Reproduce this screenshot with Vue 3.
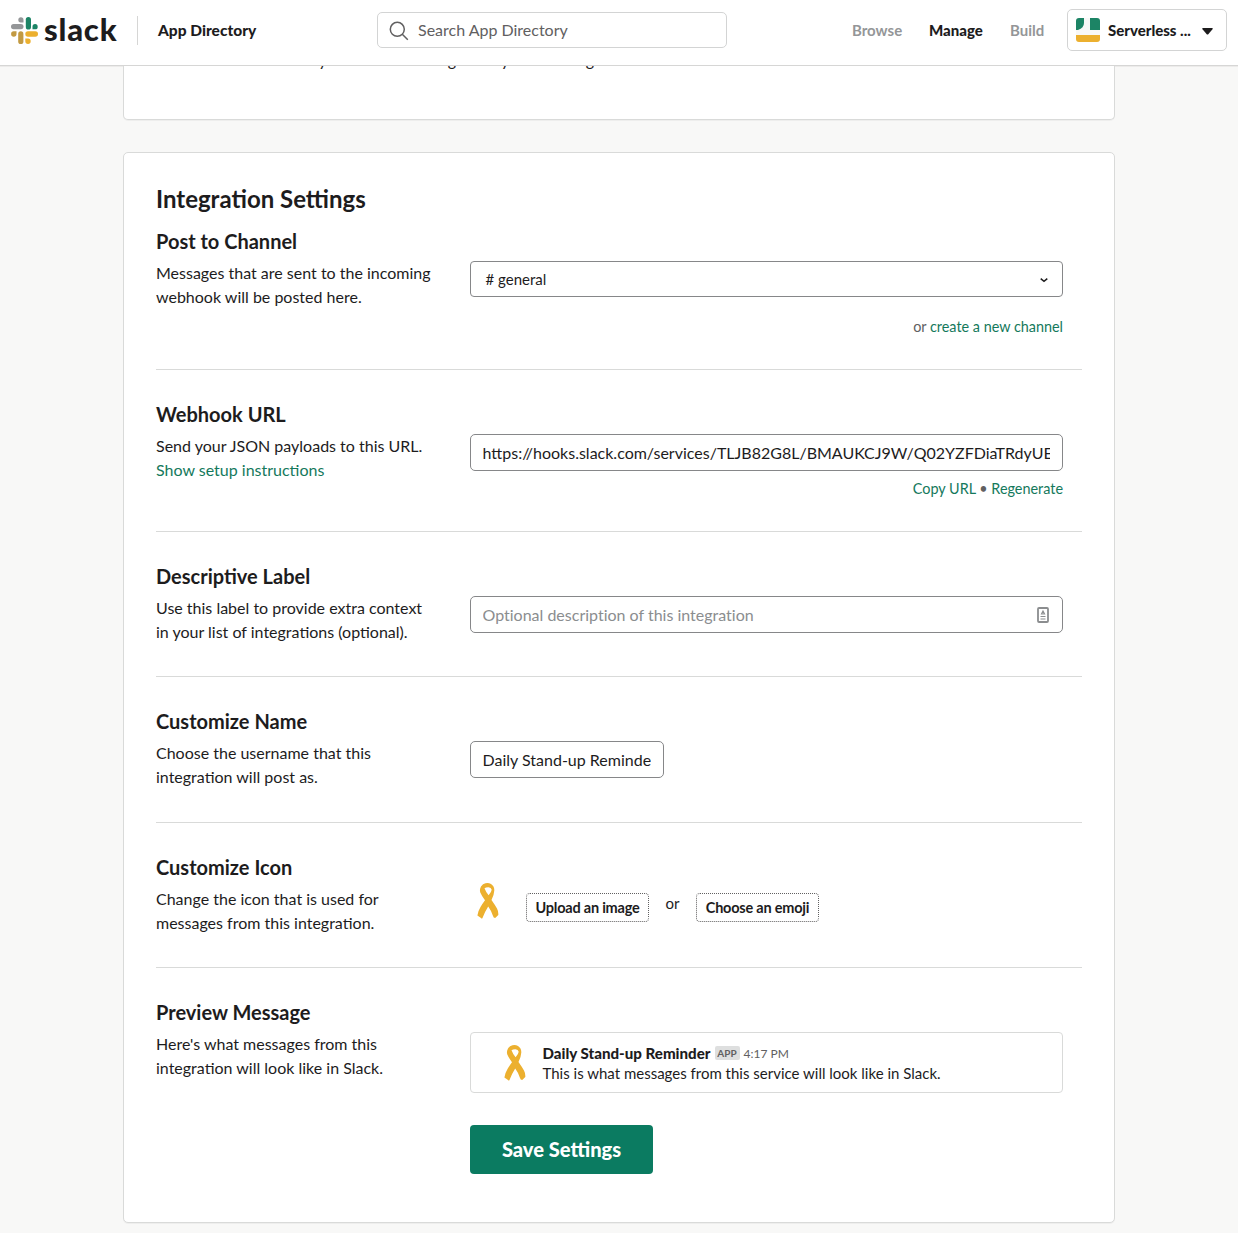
<script setup>
import { h } from 'vue'

const RibbonIcon = () =>
  h('svg', { width: 22, height: 36, viewBox: '0 0 22 36' }, [
    h('path', {
      'fill-rule': 'evenodd',
      d: 'M8.500 .3Q11.500-.4 14 1Q17.500 3.200 17.300 7.500Q17 12.500 14.500 17Q18 22 20 25.500Q21.600 28.500 21.300 32L18.200 35Q16.500 35 15.800 32.500Q14.500 28 11.200 23.500Q8 28.500 5.500 35Q4.700 36 4 35L.4 32.500Q1.500 27 3.500 24Q5.500 20.500 8 17.200Q4.500 12.500 3.300 9.500Q2.300 6.500 4 3.500Q5.800 .8 8.500 .3ZM7.500 5.300Q8.800 9 11.600 12.200Q14.500 9 14.700 6.800Q14.200 4.500 11.500 4.300Q9 4.200 7.500 5.300Z',
      fill: '#ecb02f',
    }),
  ])
</script>

<template>
  <div class="page">
    <header class="topbar">
      <svg class="mark" width="28" height="28" viewBox="0 0 28 28">
        <path d="M12.500 5.500H9.800a2.600 2.600 0 1 1 2.700-2.600z" fill="#949698" />
        <rect x="0" y="7" width="12.500" height="5.200" rx="2.600" fill="#949698" />
        <rect x="14.800" y="0" width="5.200" height="12.500" rx="2.600" fill="#1c8465" />
        <path d="M21.500 12.300V9.700a2.600 2.600 0 1 1 2.700 2.600z" fill="#1c8465" />
        <rect x="14.300" y="14.300" width="12.700" height="5.400" rx="2.700" fill="#ecb02f" />
        <path d="M14.300 21.500h2.800a2.700 2.700 0 1 1-2.800 2.800z" fill="#ecb02f" />
        <rect x="7.200" y="14.300" width="5.200" height="12.700" rx="2.600" fill="#c29a42" />
        <path d="M5.500 14.300v2.800a2.700 2.700 0 1 1-2.800-2.800z" fill="#c29a42" />
      </svg>
      <span class="wordmark">slack</span>
      <span class="bar"></span>
      <span class="directory">App Directory</span>
      <div class="search">
        <svg width="20" height="20" viewBox="0 0 20 20" fill="none" stroke="#616061" stroke-width="1.500">
          <circle cx="8.300" cy="8.300" r="7" /><path d="M13.300 13.300l5.500 5.500" />
        </svg>
        <span>Search App Directory</span>
      </div>
      <nav class="nav">
        <a class="browse">Browse</a>
        <a class="manage">Manage</a>
        <a class="build">Build</a>
      </nav>
      <div class="team">
        <svg width="24" height="24" viewBox="0 0 24 24">
          <rect width="24" height="24" rx="3" fill="#f8f8f7" />
          <path d="M3 0h5v5q0 5-6 7H0V3q0-3 3-3z" fill="#1c8465" />
          <path d="M14 0h7q3 0 3 3v9H14z" fill="#1c8465" />
          <path d="M0 17h24v4q0 3-3 3H3q-3 0-3-3z" fill="#ecb02f" />
        </svg>
        <span>Serverless ...</span>
        <svg class="caret" width="11" height="7" viewBox="0 0 11 7"><path d="M1 0h9q1.500 0 .5 1.300L6.500 6q-1 1-2 0L.5 1.300Q-.5 0 1 0z" fill="#1d1c1d" /></svg>
      </div>
    </header>

    <section class="card intro">
      <p>We recommend the way to fit into an integration you are using here in and more.</p>
    </section>

    <main class="card settings">
      <h2>Integration Settings</h2>

      <div class="row r1">
        <div class="info">
          <h3>Post to Channel</h3>
          <p>Messages that are sent to the incoming<br />webhook will be posted here.</p>
        </div>
        <div class="control">
          <div class="field select">
            <span># general</span>
            <svg width="8" height="5" viewBox="0 0 8 5" fill="none" stroke="#1d1c1d" stroke-width="1.500"><path d="M.7.7L4 3.400 7.300.7" /></svg>
          </div>
          <div class="note new">or <a>create a new channel</a></div>
        </div>
      </div>

      <div class="row r2">
        <div class="info">
          <h3>Webhook URL</h3>
          <p>Send your JSON payloads to this URL.<br /><a>Show setup instructions</a></p>
        </div>
        <div class="control">
          <div class="field"><span class="clip">https://hooks.slack.com/services/TLJB82G8L/BMAUKCJ9W/Q02YZFDiaTRdyUE</span></div>
          <div class="note"><a>Copy URL</a> • <a>Regenerate</a></div>
        </div>
      </div>

      <div class="row r3">
        <div class="info">
          <h3>Descriptive Label</h3>
          <p>Use this label to provide extra context<br />in your list of integrations (optional).</p>
        </div>
        <div class="control">
          <div class="field hint">
            <span class="clip">Optional description of this integration</span>
            <svg width="12" height="16" viewBox="0 0 12 16" fill="none" stroke="#8b8d8f">
              <rect x="1" y="1" width="10" height="14" rx="1" stroke-width="1.800" />
              <path d="M4.500 7L6 4l1.500 3zM3.500 9.500h5M3.500 12h5" stroke-width="1.200" />
            </svg>
          </div>
        </div>
      </div>

      <div class="row r4">
        <div class="info">
          <h3>Customize Name</h3>
          <p>Choose the username that this<br />integration will post as.</p>
        </div>
        <div class="control">
          <div class="field name"><span class="clip">Daily Stand-up Reminde</span></div>
        </div>
      </div>

      <div class="row r5">
        <div class="info">
          <h3>Customize Icon</h3>
          <p>Change the icon that is used for<br />messages from this integration.</p>
        </div>
        <div class="control icons">
          <RibbonIcon />
          <button class="small">Upload an image</button>
          <span class="or">or</span>
          <button class="small">Choose an emoji</button>
        </div>
      </div>

      <div class="row r6">
        <div class="info">
          <h3>Preview Message</h3>
          <p>Here's what messages from this<br />integration will look like in Slack.</p>
        </div>
        <div class="control">
          <div class="preview">
            <RibbonIcon />
            <div class="message">
              <div class="meta"><b>Daily Stand-up Reminder</b><span class="app">APP</span><time>4:17 PM</time></div>
              <div class="body">This is what messages from this service will look like in Slack.</div>
            </div>
          </div>
          <button class="save">Save Settings</button>
        </div>
      </div>
    </main>
  </div>
</template>

<style>
body { margin: 0; background: #f8f8f7; overflow: hidden; }
</style>

<style scoped>
.page { width: 1238px; height: 1233px; overflow: hidden; background: #f8f8f7; color: #1d1c1d; font-family: Lato, sans-serif; font-size: 15px; }
.page * { box-sizing: border-box; white-space: nowrap; }
svg { display: block; flex: none; }
h2, h3, p { margin: 0; }
a { color: #15795c; }
button { font-family: inherit; color: #1d1c1d; padding: 0; }

.topbar { display: flex; align-items: center; height: 66px; padding: 0 11px 5px 11px; background: #fff; border-bottom: 1px solid #d6d6d5; box-shadow: 0 1px 0 #ecebea; }
.topbar > * { flex: none; }
.mark { margin-top: 2px; }
.wordmark { width: 73px; margin-left: 5px; font-size: 31px; font-weight: 900; line-height: 36px; margin-top: -3px; letter-spacing: .8px; }
.bar { width: 1px; height: 29px; background: #d6d6d5; margin-left: 20px; }
.directory { width: 219px; margin-left: 20px; font-weight: 900; font-size: 15.500px; }
.search { display: flex; align-items: center; gap: 9px; width: 350px; height: 36px; padding-left: 11px; border: 1px solid #d3d4d4; border-radius: 5px; color: #616061; font-size: 16px; }
.search svg { margin-top: 1px; }
.search span { margin-top: -2px; }
.nav { display: flex; width: 215px; margin-left: 125px; font-weight: 700; }
.nav a { color: #949698; }
.nav .browse { width: 77px; }
.nav .manage { width: 81px; color: #1d1c1d; font-weight: 900; }
.team { display: flex; align-items: center; width: 160px; height: 42px; padding-left: 8px; border: 1px solid #d3d4d4; border-radius: 5px; font-weight: 900; }
.team span { width: 84px; margin-left: 8px; }
.caret { margin-left: 10px; margin-top: 2px; }

.card { width: 992px; margin: 0 auto; background: #fff; border: 1px solid #d9dad9; border-radius: 5px; box-shadow: 0 1px 0 #eeeeed; }
.intro { height: 54px; border-top: 0; border-radius: 0 0 5px 5px; overflow: hidden; padding-left: 32px; }
.intro p { margin-top: -18px; line-height: 24px; font-size: 16px; }
.settings { height: 1071px; margin-top: 32px; padding: 32px 32px 0; }
h2 { height: 44px; line-height: 28px; font-size: 24px; font-weight: 700; }
.row { display: flex; width: 926px; padding-top: 32px; border-bottom: 1px solid #d9dad9; }
.r1 { height: 141px; padding-top: 0; }
.r2 { height: 162px; }
.r3 { height: 145px; }
.r4 { height: 146px; }
.r5 { height: 145px; }
.r6 { height: 250px; border-bottom: 0; }
.info { width: 314px; flex: none; }
h3 { height: 32px; line-height: 24px; font-size: 20px; font-weight: 700; }
.info p { line-height: 24px; font-size: 16px; }
.control { width: 593px; padding-top: 32px; }
.field { display: flex; align-items: center; height: 37px; padding: 0 12px 1px 11.500px; border: 1px solid #868789; border-radius: 5px; font-size: 16px; }
.clip { flex: 1; overflow: hidden; }
.select { height: 36px; padding: 0 14px 0 15px; justify-content: space-between; border-radius: 4px; font-size: 15px; }
.select span { margin-left: -.5px; }
.select svg { margin-top: 2px; }
.hint { color: #8b8d8f; font-variant-ligatures: none; padding-right: 13px; }
.hint svg { margin-top: 1px; }
.name { width: 194px; }
.note { margin-top: 7px; line-height: 22px; font-size: 14.400px; text-align: right; color: #616061; }
.new { margin-top: 19px; }
.icons { display: flex; align-items: flex-start; padding-top: 28px; padding-left: 7px; }
.small { width: 123px; height: 29px; margin-top: 10px; padding-bottom: 1px; border: 1px dotted #616061; border-radius: 4px; background: #fff; font-size: 14.500px; letter-spacing: -.22px; font-weight: 700; }
.icons svg + .small { margin-left: 27px; }
.or { width: 47px; text-align: center; line-height: 24px; margin-top: 8px; }
.preview { display: flex; height: 61px; padding: 12px 0 0 33px; border: 1px solid #d9dad9; border-radius: 4px; }
.message { margin-left: 16.500px; margin-top: -2px; line-height: 20px; }
.meta { display: flex; align-items: center; height: 20px; }
.meta b { font-weight: 900; font-size: 15.100px; }
.app { margin: 0 4px; width: 25px; height: 14px; line-height: 14px; border-radius: 2px; background: #dedfdf; color: #616061; font-size: 10px; font-weight: 700; text-align: center; }
time { font-size: 12px; line-height: 18px; color: #616061; margin-top: 2px; }
.save { width: 183px; height: 49px; margin-top: 32px; padding-bottom: 2px; border: 0; border-radius: 4px; background: #0b7b61; color: #fff; font-size: 20.100px; font-weight: 900; }
</style>
